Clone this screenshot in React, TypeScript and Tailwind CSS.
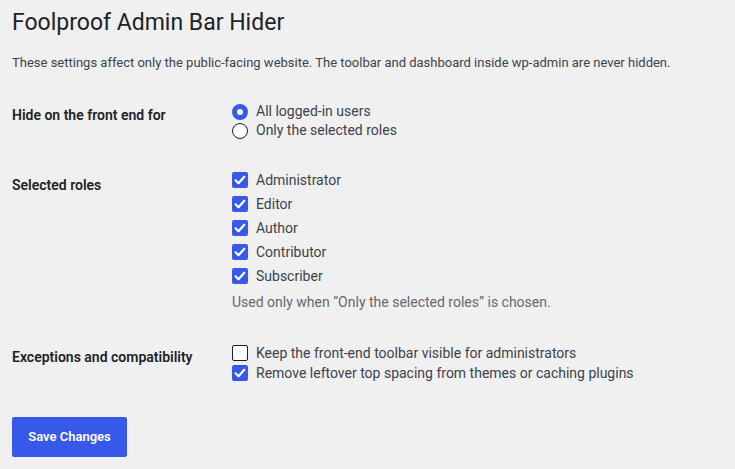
import React from 'react';

const ACCENT = 'bg-[#3858e9]';

const Check: React.FC<{ checked: boolean }> = ({ checked }) =>
  checked ? (
    <span className={`flex h-4 w-4 shrink-0 items-center justify-center rounded-[2px] ${ACCENT}`}>
      <svg viewBox="0 0 16 16" className="h-4 w-4" fill="none">
        <path d="M3.6 8.3l2.9 2.9 5.8-6.4" stroke="#fff" strokeWidth="2.2" strokeLinecap="round" strokeLinejoin="round" />
      </svg>
    </span>
  ) : (
    <span className="h-4 w-4 shrink-0 rounded-[2px] border border-[#1e1e1e] bg-white" />
  );

const Radio: React.FC<{ checked: boolean }> = ({ checked }) =>
  checked ? (
    <span className="h-4 w-4 shrink-0 rounded-full border-[5px] border-[#3858e9] bg-white" />
  ) : (
    <span className="h-4 w-4 shrink-0 rounded-full border border-[#1e1e1e] bg-white" />
  );

const roles = ['Administrator', 'Editor', 'Author', 'Contributor', 'Subscriber'];

export default function App() {
  return (
    <div className="min-h-[469px] bg-[#f0f0f1] px-3 font-['Roboto',sans-serif] text-[#1e1e1e]">
      <h1 className="pt-[8px] text-[23px] font-normal leading-[29px] text-[#1d2327]">Foolproof Admin Bar Hider</h1>
      <p className="mt-[16px] text-[13px] leading-[20px] text-[#3c434a]">
        These settings affect only the public-facing website. The toolbar and dashboard inside wp-admin are never hidden.
      </p>

      <div className="mt-[29px] flex">
        <div className="w-[220px] shrink-0 pt-[3px] text-[14px] font-semibold leading-[20px] text-[#1d2327]">
          Hide on the front end for
        </div>
        <div className="flex flex-col text-[14px] text-[#3c434a]">
          <label className="flex h-[19px] items-center gap-2">
            <Radio checked />
            All logged-in users
          </label>
          <label className="flex h-[19px] items-center gap-2">
            <Radio checked={false} />
            Only the selected roles
          </label>
        </div>
      </div>

      <div className="mt-[28px] flex">
        <div className="w-[220px] shrink-0 pt-[7px] text-[14px] font-semibold leading-[20px] text-[#1d2327]">
          Selected roles
        </div>
        <div className="flex flex-col text-[14px] text-[#3c434a]">
          {roles.map((r) => (
            <label key={r} className="flex h-[24px] items-center gap-2">
              <Check checked />
              {r}
            </label>
          ))}
          <p className="mt-[4px] leading-[20px] text-[#646970]">Used only when “Only the selected roles” is chosen.</p>
        </div>
      </div>

      <div className="mt-[31px] flex">
        <div className="w-[220px] shrink-0 pt-[4px] text-[14px] font-semibold leading-[20px] text-[#1d2327]">
          Exceptions and compatibility
        </div>
        <div className="flex flex-col text-[14px] text-[#3c434a]">
          <label className="flex h-[20px] items-center gap-2">
            <Check checked={false} />
            Keep the front-end toolbar visible for administrators
          </label>
          <label className="flex h-[20px] items-center gap-2">
            <Check checked />
            Remove leftover top spacing from themes or caching plugins
          </label>
        </div>
      </div>

      <button className={`mt-[34px] h-[40px] w-[115px] rounded-[2px] ${ACCENT} text-[13px] font-semibold text-white`}>
        Save Changes
      </button>
    </div>
  );
}
